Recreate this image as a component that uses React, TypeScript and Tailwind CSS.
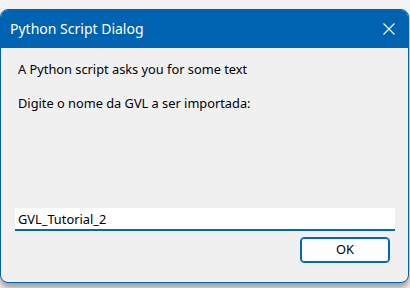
import React, { useState } from 'react';

const FONT = { fontFamily: '"Noto Sans", "Open Sans", sans-serif' };

export default function App() {
  const [value, setValue] = useState('GVL_Tutorial_2');

  return (
    <div
      className="w-[410px] h-[288px] bg-[#f3f3f3] pt-[9px] overflow-hidden"
      style={FONT}
    >
      <div className="w-[409px] h-[274px] flex flex-col rounded-[8px] bg-[#f0f0f0] border border-[#0063b1] shadow-[0_5px_6px_rgba(0,0,0,0.35)] overflow-hidden">
        <div className="h-[38px] bg-[#0063b1] flex items-center justify-between pl-[9px] pr-[13px] text-white">
          <span className="text-[14px] leading-none">Python Script Dialog</span>
          <svg width="12" height="12" viewBox="0 0 12 12" aria-label="Fechar">
            <path d="M0.5 0.5 L11.5 11.5 M11.5 0.5 L0.5 11.5" stroke="white" strokeWidth="1.1" />
          </svg>
        </div>
        <div className="flex-1 flex flex-col px-[14px] text-[12.8px] text-black">
          <p className="mt-[13px] pl-[3px] leading-[16px]">A Python script asks you for some text</p>
          <p className="mt-[18px] pl-[3px] leading-[16px]">Digite o nome da GVL a ser importada:</p>
          <input
            value={value}
            onChange={(e) => setValue(e.target.value)}
            aria-label="Nome da GVL"
            className="mt-[97px] h-[23px] w-[380px] bg-white border-b-2 border-[#0067c0] px-[3px] text-[12.8px] outline-none"
          />
          <div className="flex justify-end mt-[6px] pr-[4px]">
            <button className="w-[90px] h-[26px] rounded-[4px] border border-[#0067c0] bg-[#fdfdfd] text-[12.8px] shadow-[inset_0_0_0_1px_#0067c0]">
              OK
            </button>
          </div>
        </div>
      </div>
    </div>
  );
}
